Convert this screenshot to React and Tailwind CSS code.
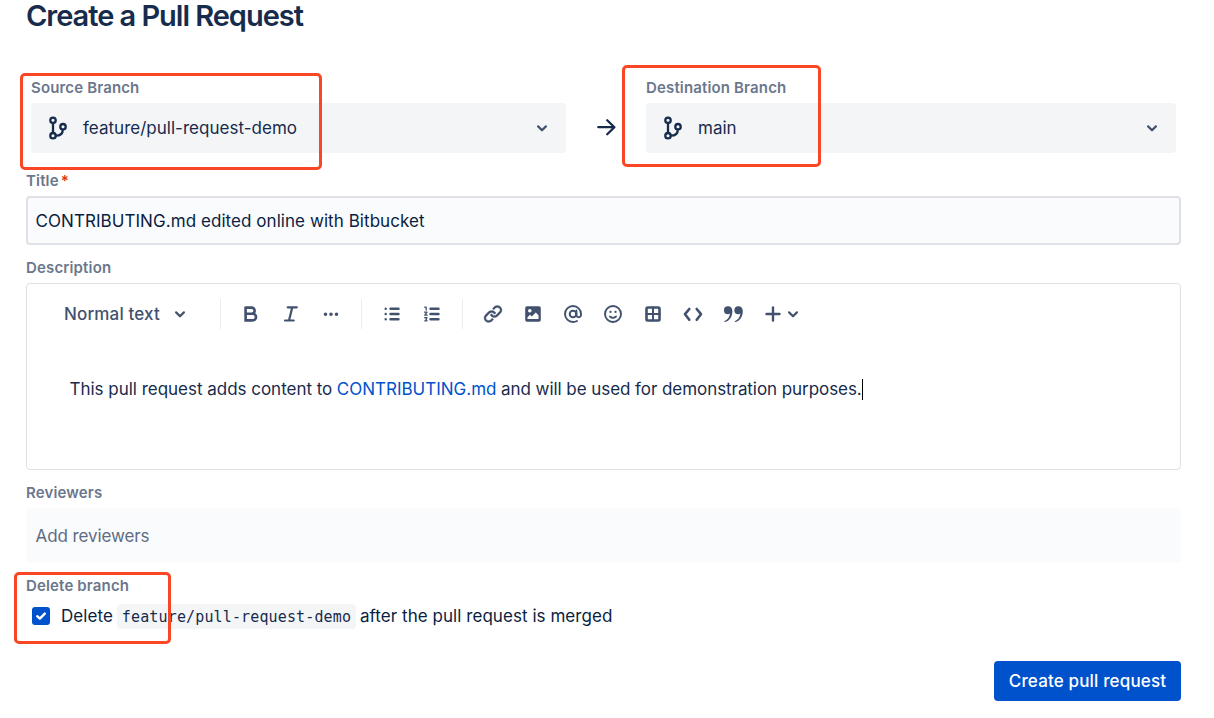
const Icon = ({ children }) => (
  <svg width="30" height="30" viewBox="0 0 30 30" fill="none" stroke="currentColor" strokeLinecap="round" strokeLinejoin="round" className="shrink-0">
    {children}
  </svg>
);

const Chevron = () => (
  <svg width="12" height="12" viewBox="0 0 12 12" fill="none" stroke="currentColor" strokeWidth="2.2" strokeLinecap="round" strokeLinejoin="round" className="shrink-0">
    <path d="M2.1 4.4L6 8.3L9.9 4.4" />
  </svg>
);

const BranchIcon = () => (
  <svg width="22" height="26" viewBox="0 0 22 26" fill="none" stroke="currentColor" strokeWidth="2.3" className="shrink-0">
    <circle cx="6" cy="5.3" r="2.7" />
    <circle cx="6" cy="20.7" r="2.7" />
    <circle cx="16" cy="11.7" r="2.7" />
    <path d="M6 8.1V17.9M15.8 14.4C15.8 18.4 13.6 20.7 8.8 20.7" />
  </svg>
);

const Label = ({ children }) => (
  <div className="h-4 text-[15px] leading-4 font-semibold tracking-[0.15px] whitespace-nowrap text-[#6b778c]">{children}</div>
);

const BranchSelect = ({ label, children, className }) => (
  <div className={className}>
    <Label>{label}</Label>
    <div className="mt-[7px] flex h-[50px] items-center rounded bg-[#f4f5f7] pr-[18px] pl-4 text-[#172b4d]">
      <BranchIcon />
      <span className="ml-[14px] flex-1 text-[17px] leading-6 tracking-[0.02px]">{children}</span>
      <span className="text-[#42526e]"><Chevron /></span>
    </div>
  </div>
);

const Divider = ({ className }) => <div className={`h-[30px] w-px bg-[#ebecf0] ${className}`} />;

export default function App() {
  return (
    <main className="relative h-[718px] w-[1214px] bg-white pr-[33px] pl-[26px] font-['Inter',sans-serif] text-[#172b4d]">
      <h1 className="h-[31px] text-[29px] leading-[31px] font-[560] tracking-[-1.03px] whitespace-nowrap">Create a Pull Request</h1>

      <div className="mt-[49px] flex pr-[5px] pl-[5px]">
        <BranchSelect className="w-[535px]" label="Source Branch">feature/pull-request-demo</BranchSelect>
        <div className="flex w-20 justify-center pt-[33px]">
          <Icon><path strokeWidth="2.3" d="M7.3 14.2H23.2M16.2 7.2L23.4 14.2L16.2 21.2" /></Icon>
        </div>
        <BranchSelect className="w-[530px]" label="Destination Branch">main</BranchSelect>
      </div>

      <div className="mt-5">
        <Label>Title<span className="ml-[2px] text-[#de350b]">*</span></Label>
        <div className="mt-[7px] flex h-[49px] items-center rounded border-2 border-[#dfe1e6] bg-[#fafbfc] pl-[7.5px] text-[17px] leading-6 tracking-[0.06px] text-[#091e42]">
          CONTRIBUTING.md edited online with Bitbucket
        </div>
      </div>

      <div className="mt-[15px]">
        <Label>Description</Label>
        <div className="mt-[7px] h-[187px] rounded border border-[#dfe1e6]">
          <div className="mt-[15px] flex h-[30px] items-center text-[#42526e]">
            <span className="ml-[37px] w-[110px] text-[17px] leading-6 font-medium tracking-[0.15px]">Normal text</span>
            <Chevron />
            <Divider className="ml-[34px]" />
            <div className="ml-[15px] flex gap-[10px]">
              <Icon><path strokeWidth="2.6" strokeLinecap="butt" strokeLinejoin="miter" d="M9.6 8.6H15.6a3 3 0 0 1 0 6.1H9.6M15.6 14.7H16.7a3.3 3.3 0 0 1 0 6.7H9.6V7.5" /></Icon>
              <Icon><path strokeWidth="2.2" d="M11.7 8.3H20.8M9 21.5H17.7M16.3 8.3L13 21.5" /></Icon>
              <Icon><path strokeWidth="3.6" d="M9.5 15.2H9.51M15 15.2H15.01M20.5 15.2H20.51" /></Icon>
            </div>
            <Divider className="ml-[15px]" />
            <div className="ml-[15px] flex gap-[10px]">
              <Icon><path strokeWidth="2.4" d="M13.5 9.7H21.5M13.5 15H21.5M13.5 20.3H21.5M8.7 9.7H8.71M8.7 15H8.71M8.7 20.3H8.71" /></Icon>
              <Icon>
                <path strokeWidth="2.4" d="M13.5 9.7H21.5M13.5 15H21.5M13.5 20.3H21.5" />
                <path strokeWidth="1.3" d="M7.7 8.2H9.2V11M7.5 13.2H10L7.8 16.2H10.2M7.7 18.7H10L9 20.2L10 21.8H7.7" />
              </Icon>
            </div>
            <Divider className="ml-[15px]" />
            <div className="ml-[15px] flex gap-[10px]">
              <Icon>
                <g transform="translate(3 2.5)" fill="currentColor" strokeWidth=".3">
                  <path d="M12.856 5.457l-.937.92a1.002 1.002 0 0 0 0 1.437 1.047 1.047 0 0 0 1.463 0l.984-.966c.967-.95 2.542-1.135 3.602-.288a2.54 2.54 0 0 1 .203 3.81l-2.903 2.852a2.646 2.646 0 0 1-3.696 0l-1.11-1.09L9 13.57l1.108 1.089c1.822 1.788 4.802 1.788 6.622 0l2.905-2.852a4.558 4.558 0 0 0-.357-6.82c-1.893-1.517-4.695-1.226-6.422.47" />
                  <path d="M11.144 19.543l.937-.92a1.002 1.002 0 0 0 0-1.437 1.047 1.047 0 0 0-1.462 0l-.985.966c-.967.95-2.542 1.135-3.602.288a2.54 2.54 0 0 1-.203-3.81l2.903-2.852a2.646 2.646 0 0 1 3.696 0l1.11 1.09L15 11.43l-1.108-1.089c-1.822-1.788-4.802-1.788-6.622 0l-2.905 2.852a4.558 4.558 0 0 0 .357 6.82c1.893 1.517 4.695 1.226 6.422-.47" />
                </g>
              </Icon>
              <Icon>
                <rect x="7.2" y="7.2" width="15.6" height="15.6" rx="1.8" fill="currentColor" stroke="none" />
                <circle cx="11.8" cy="11.8" r="1.8" fill="white" stroke="none" />
                <path d="M9.5 20V18.2L12 15.8L13.8 17.5L17.8 13.5L20.5 16.2V20Z" fill="white" stroke="none" />
              </Icon>
              <Icon>
                <circle cx="15" cy="15" r="3.3" strokeWidth="2" />
                <path strokeWidth="1.9" d="M18.4 11.5V16.5A2.4 2.4 0 0 0 23 16.5V15A8 8 0 1 0 15 23C16.7 23 17.6 22.8 19 22" />
              </Icon>
              <Icon>
                <circle cx="15" cy="15" r="8" strokeWidth="1.9" />
                <path strokeWidth="1.7" d="M11.9 17.5Q15 20.3 18.1 17.5" />
                <path strokeWidth="2.3" d="M12.5 12.9H12.51M17.5 12.9H17.51" />
              </Icon>
              <Icon>
                <rect x="8.5" y="8.5" width="13" height="13" rx="1.2" strokeWidth="2.6" />
                <path strokeWidth="2" d="M15 8.5V21.5M8.5 15H21.5" />
              </Icon>
              <Icon><path strokeWidth="2.6" d="M11.3 10L7 15.2L11.3 20.8M18.7 10L23 15.2L18.7 20.8" /></Icon>
              <Icon>
                <g fill="currentColor" stroke="none">
                  <path d="M10 7.2A4 4 0 0 0 9.9 15.2C10.8 15.2 11.4 15 12 14.6C11.5 18.5 9.8 20.6 6.4 22.2C6.1 22.5 6.4 23.2 6.9 23.1C11.6 21.8 14.4 17.5 14.4 12.2C14.4 9 12.6 7.2 10 7.2Z" />
                  <path d="M20.4 7.2A4 4 0 0 0 20.3 15.2C21.2 15.2 21.8 15 22.4 14.6C21.9 18.5 20.2 20.6 16.8 22.2C16.5 22.5 16.8 23.2 17.3 23.1C22 21.8 24.8 17.5 24.8 12.2C24.8 9 23 7.2 20.4 7.2Z" />
                </g>
              </Icon>
              <Icon><path strokeWidth="2.4" d="M15 8.5V21.5M8.5 15H21.5" /></Icon>
            </div>
            <span className="-ml-px"><Chevron /></span>
          </div>
          <p className="mt-[48px] ml-[42.5px] flex h-6 items-center text-[17px] leading-6 whitespace-nowrap">
            <span className="tracking-[-0.02px]">This pull request adds content to</span>
            <a className="ml-[4.5px] text-[#0052cc]">CONTRIBUTING.md</a>
            <span className="ml-[4.5px] tracking-[-0.06px]">and will be used for demonstration purposes.</span>
            <span className="h-[21px] w-px bg-black" />
          </p>
        </div>
      </div>

      <div className="mt-[15px]">
        <Label>Reviewers</Label>
        <div className="mt-[7px] flex h-[55px] items-center rounded bg-[#fafbfc] pl-[9.5px] text-[17px] leading-6 tracking-[-0.1px] text-[#5e6c84]">Add reviewers</div>
      </div>

      <div className="mt-[15px]">
        <Label>Delete branch</Label>
        <div className="mt-[9px] flex h-[26px] items-center pl-[6px] text-[17px] leading-6 whitespace-nowrap text-[#091e42]">
          <svg width="18" height="18" viewBox="0 0 18 18" className="shrink-0">
            <rect width="18" height="18" rx="3" fill="#0052cc" />
            <path d="M5.2 9.2L7.8 11.6L12.8 6.6" fill="none" stroke="white" strokeWidth="2.4" strokeLinecap="round" strokeLinejoin="round" />
          </svg>
          <span className="ml-[11px] w-[56px] tracking-[0.06px]">Delete</span>
          <code className="flex h-[25px] w-[239px] items-center justify-center rounded bg-[#f4f5f7] pt-px font-['DejaVu_Sans_Mono',monospace] text-[15px] tracking-[0.14px] text-[#172b4d]">feature/pull-request-demo</code>
          <span className="ml-1 tracking-[0.05px]">after the pull request is merged</span>
        </div>
      </div>

      <div className="mt-[32px] flex justify-end">
        <button className="h-10 w-[187px] rounded bg-[#0052cc] text-[17px] leading-6 font-medium tracking-[0.16px] text-white">Create pull request</button>
      </div>

      <div className="absolute top-[73px] left-5 h-[97px] w-[302px] rounded-[5px] border-3 border-[#f94624]" />
      <div className="absolute top-[65px] left-[622px] h-[102px] w-[199px] rounded-[5px] border-3 border-[#f94624]" />
      <div className="absolute top-[572px] left-[14px] h-[72px] w-[157px] rounded-[5px] border-3 border-[#f94624]" />
    </main>
  );
}
